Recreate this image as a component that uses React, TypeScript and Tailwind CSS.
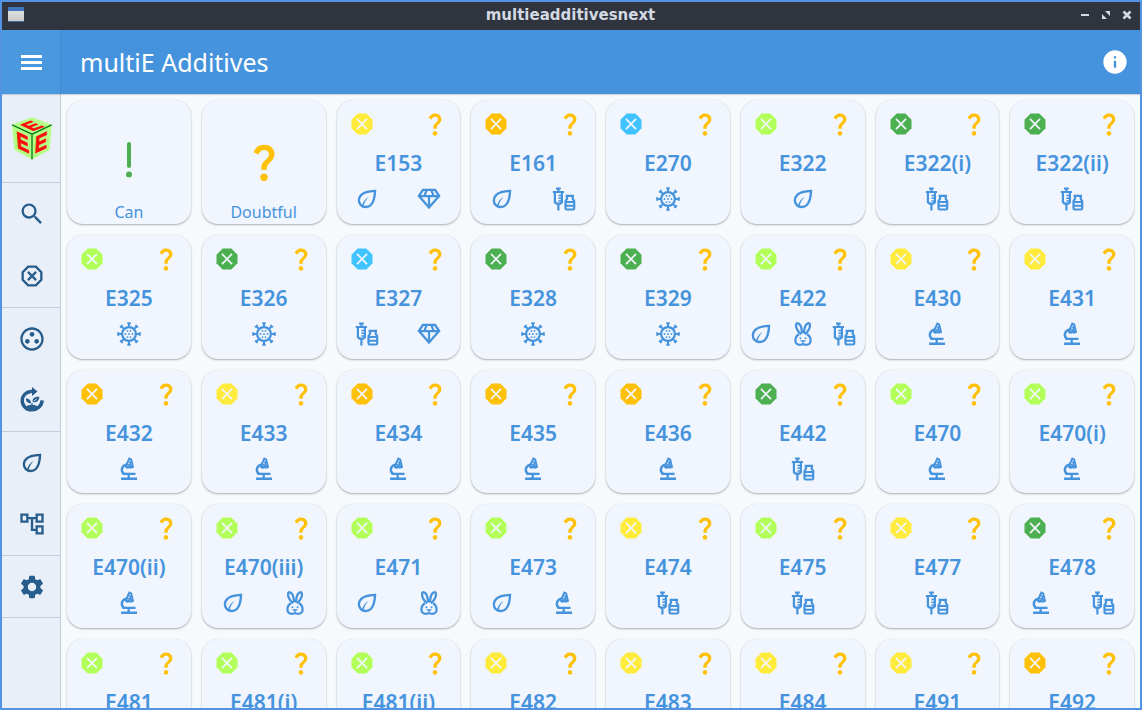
import type { ReactNode } from "react";
import {
  MdInfo,
  MdOutlineAccountTree,
  MdOutlineGroupWork,
  MdQuestionMark,
  MdSearch,
  MdSettings,
} from "react-icons/md";

const OCTAGON = "8.27,3 15.73,3 21,8.27 21,15.73 15.73,21 8.27,21 3,15.73 3,8.27";

type Origin = "leaf" | "gem" | "drug" | "virus" | "rabbit" | "micro";
type Level = "yellow" | "amber" | "blue" | "lime" | "green";

function Svg({ children, className = "size-7" }: { children: ReactNode; className?: string }) {
  return (
    <svg
      viewBox="0 0 24 24"
      className={className}
      fill="none"
      stroke="currentColor"
      strokeWidth="2"
      aria-hidden="true"
    >
      {children}
    </svg>
  );
}

function Leaf() {
  return (
    <Svg>
      <path d="M18.9 5.1C14 5.3 9.3 6.200 6.900 8.700C4.400 11.200 4.500 15.200 6.700 17.300C9 19.500 13 19.400 15.300 17.100C17.800 14.600 18.700 10 18.900 5.100Z" />
      <path d="M7.600 17.900C8.500 14.300 10.600 11.600 13.400 10C11.200 12.400 9.600 15 9 18.400Z" fill="currentColor" stroke="none" />
    </Svg>
  );
}

function Gem() {
  return (
    <Svg className="size-[26px]">
      <path d="M6.400 3.600H17.600L21.300 9.200L12 19.800L2.700 9.200Z" strokeWidth="2.200" />
      <path d="M2.500 9.400H21.500M12 9.400V19.500M9.700 4L7.800 9.200M14.300 4L16.200 9.200" strokeWidth="2" />
    </Svg>
  );
}

function Drug() {
  return (
    <Svg className="size-6">
      <path d="M4 1.500H8.800M6.400 1.500V5M0.800 5H12M6.400 17V23.500" strokeWidth="2.200" />
      <path d="M2.900 5.500V15.200L4.500 16.600H8.300L9.900 15.200V5.500" strokeWidth="2.200" />
      <path d="M6.400 8.500H10M6.400 11.200H10M6.400 13.900H9.500" strokeWidth="1.500" />
      <path d="M13.600 8.800H22M15 9.500V11.800L13.500 14V21.200Q13.500 22.500 14.600 22.500H21Q22.200 22.500 22.200 21.200V14L20.700 11.800V9.500" strokeWidth="2.200" />
      <path d="M13.500 15H22M13.500 18.800H22" strokeWidth="1.900" />
    </Svg>
  );
}

function Virus() {
  const spokes = [0, 45, 90, 135, 180, 225, 270, 315];
  return (
    <Svg className="size-6">
      <circle cx="12" cy="12" r="6.900" strokeWidth="2.200" />
      {spokes.map((angle) => (
        <path key={angle} d="M12 5.300V1.200M10.300 1.200H13.700" strokeWidth="2" transform={`rotate(${angle} 12 12)`} />
      ))}
      <g fill="currentColor" stroke="none">
        <circle cx="10.500" cy="8.900" r="0.950" />
        <circle cx="13.500" cy="8.900" r="0.950" />
        <circle cx="8.500" cy="12" r="0.950" />
        <circle cx="12" cy="12" r="0.950" />
        <circle cx="15.500" cy="12" r="0.950" />
        <circle cx="10.500" cy="15.100" r="0.950" />
        <circle cx="13.500" cy="15.100" r="0.950" />
      </g>
    </Svg>
  );
}

function Rabbit() {
  return (
    <Svg className="size-[26px]">
      <path
        d="M10.300 12.200C7.300 10.500 5 5.500 5.700 2.900C6.200 1.500 8 2 9.100 3.400C10.600 5.500 11 9 11 11.600M13.700 12.200C16.700 10.500 19 5.500 18.300 2.900C17.800 1.500 16 2 14.900 3.400C13.400 5.500 13 9 13 11.600"
        strokeWidth="2.100"
      />
      <path
        d="M8.300 12.300C6.200 13.500 5 15.600 5 18C5 20.500 6.800 22 9 22C10.400 22 11 21.400 12 21.400C13 21.400 13.600 22 15 22C17.200 22 19 20.500 19 18C19 15.600 17.800 13.500 15.700 12.300"
        strokeWidth="2.100"
      />
      <circle cx="9.600" cy="16" r="0.900" fill="currentColor" stroke="none" />
      <circle cx="14.400" cy="16" r="0.900" fill="currentColor" stroke="none" />
      <path d="M10.500 18.300H13.500L12 19.600ZM12 19V21.500" strokeWidth="1" />
    </Svg>
  );
}

function Microscope() {
  return (
    <Svg className="size-[26px]">
      <path d="M4.700 21H19.400M11.700 21.200V17.200M6 16.600H18" strokeWidth="2.100" />
      <path d="M9.500 7.900C4.500 9.300 4.300 14.600 7.500 16.600" strokeWidth="2.200" />
      <path d="M9.200 9.100L12.300 2.400L14 3.100L15.700 10.100L13.900 10.900L9.200 9.100" strokeWidth="1.800" />
      <path d="M12.800 4.800L14.200 10.600" strokeWidth="1.600" />
      <circle cx="10.700" cy="9.300" r="1.700" strokeWidth="1.500" />
    </Svg>
  );
}

function Recycle() {
  return (
    <Svg>
      <path d="M11 4.700C6.700 5 3.600 8.400 3.600 12.500C3.600 17 7.200 20.500 11.800 20.500C16.300 20.500 20.500 17 20.700 12.300" strokeWidth="2.900" />
      <path d="M10.500 3.300H12V0.800L16.700 4.700L12 8.600V6H10.500Z" fill="currentColor" stroke="none" />
      <path d="M5.500 18.500Q8.500 15.800 12 16Q15.500 15.800 18.500 18.500L15 21H9Z" fill="currentColor" stroke="none" />
      <path d="M11.200 15C8.300 15 6.600 13.300 6.800 10.800C9.500 10.800 11.200 12.300 11.200 15ZM12.700 13.900C12 10.700 14.200 8.900 18.200 9.200C18.300 12.400 16 14.500 12.700 13.900Z" fill="currentColor" stroke="none" />
      <path d="M12 17V14.500" strokeWidth="1" />
      <path d="M13.500 13.200L16 11" stroke="#e8eff8" strokeWidth="0.800" />
    </Svg>
  );
}

function OctagonOutline() {
  return (
    <Svg>
      <polygon points="8.700,4 15.300,4 20,8.700 20,15.300 15.300,20 8.700,20 4,15.300 4,8.700" />
      <path d="M8.500 8.500L15.500 15.500M15.500 8.500L8.500 15.500" />
    </Svg>
  );
}

function OctagonFilled() {
  return (
    <Svg>
      <polygon points={OCTAGON} fill="currentColor" stroke="none" />
      <path d="M7.700 7.700L16.300 16.300M16.300 7.700L7.700 16.300" stroke="#f1f5fd" strokeWidth="1.500" />
    </Svg>
  );
}

function Logo() {
  const faces = [
    "matrix(0.59 0.28 0.06 0.75 0 23)",
    "matrix(0.59 -0.28 -0.04 0.75 60 51)",
    "matrix(0.6 -0.23 0.59 0.28 0 23)",
  ];
  return (
    <svg viewBox="0 0 120 128" className="h-[43px] w-10" aria-hidden="true">
      <polygon points="60,0 119,23 113,98 60,127 7,98 0,23" fill="#b4ff85" />
      <path d="M0 23L60 51L119 23M60 51V127" stroke="#0c7a1c" strokeWidth="4" fill="none" />
      {faces.map((matrix) => (
        <text
          key={matrix}
          transform={matrix}
          x="50"
          y="84"
          textAnchor="middle"
          fontSize="94"
          fontWeight="700"
          fill="#fb0d0d"
          stroke="#fb0d0d"
          strokeWidth="4"
          className="font-['Liberation_Sans',sans-serif]"
        >
          E
        </text>
      ))}
    </svg>
  );
}

const originIcons: Record<Origin, { label: string; icon: ReactNode }> = {
  leaf: { label: "Plant", icon: <Leaf /> },
  gem: { label: "Mineral", icon: <Gem /> },
  drug: { label: "Synthetic", icon: <Drug /> },
  virus: { label: "Microbial", icon: <Virus /> },
  rabbit: { label: "Animal", icon: <Rabbit /> },
  micro: { label: "Artificial", icon: <Microscope /> },
};

const levelColors: Record<Level, string> = {
  yellow: "text-[#ffeb3b]",
  amber: "text-[#ffc107]",
  blue: "text-[#40c4ff]",
  lime: "text-[#b2ff59]",
  green: "text-[#4caf50]",
};

const additives: [string, Level, Origin[]][] = [
  ["E153", "yellow", ["leaf", "gem"]],
  ["E161", "amber", ["leaf", "drug"]],
  ["E270", "blue", ["virus"]],
  ["E322", "lime", ["leaf"]],
  ["E322(i)", "green", ["drug"]],
  ["E322(ii)", "green", ["drug"]],
  ["E325", "lime", ["virus"]],
  ["E326", "green", ["virus"]],
  ["E327", "blue", ["drug", "gem"]],
  ["E328", "green", ["virus"]],
  ["E329", "green", ["virus"]],
  ["E422", "lime", ["leaf", "rabbit", "drug"]],
  ["E430", "yellow", ["micro"]],
  ["E431", "yellow", ["micro"]],
  ["E432", "amber", ["micro"]],
  ["E433", "yellow", ["micro"]],
  ["E434", "amber", ["micro"]],
  ["E435", "amber", ["micro"]],
  ["E436", "amber", ["micro"]],
  ["E442", "green", ["drug"]],
  ["E470", "lime", ["micro"]],
  ["E470(i)", "lime", ["micro"]],
  ["E470(ii)", "lime", ["micro"]],
  ["E470(iii)", "lime", ["leaf", "rabbit"]],
  ["E471", "lime", ["leaf", "rabbit"]],
  ["E473", "lime", ["leaf", "micro"]],
  ["E474", "yellow", ["drug"]],
  ["E475", "lime", ["drug"]],
  ["E477", "yellow", ["drug"]],
  ["E478", "green", ["micro", "drug"]],
  ["E481", "lime", ["micro"]],
  ["E481(i)", "lime", ["micro"]],
  ["E481(ii)", "lime", ["micro"]],
  ["E482", "yellow", ["micro"]],
  ["E483", "yellow", ["micro"]],
  ["E484", "yellow", ["micro"]],
  ["E491", "yellow", ["micro"]],
  ["E492", "amber", ["micro"]],
];

const navGroups: { label: string; icon: ReactNode }[][] = [
  [
    { label: "Search", icon: <MdSearch className="size-7" /> },
    { label: "Danger", icon: <OctagonOutline /> },
  ],
  [
    { label: "Groups", icon: <MdOutlineGroupWork className="size-7" /> },
    { label: "Renewable", icon: <Recycle /> },
  ],
  [
    { label: "Origin", icon: <Leaf /> },
    { label: "Categories", icon: <MdOutlineAccountTree className="size-7" /> },
  ],
  [{ label: "Settings", icon: <MdSettings className="size-7" /> }],
];

const cardClass =
  "flex aspect-square min-w-0 flex-col rounded-2xl bg-[#f1f5fd] text-[#4593dd] shadow-[0_1px_2px_rgba(0,0,0,0.3),0_0_1px_rgba(0,0,0,0.1)]";

function AdditiveCard({ name, level, origins }: { name: string; level: Level; origins: Origin[] }) {
  return (
    <button type="button" className={cardClass}>
      <span className="flex w-full justify-between px-[11px] pt-2.5">
        <span className={levelColors[level]}>
          <OctagonFilled />
        </span>
        <MdQuestionMark className="size-7 text-[#ffc107]" />
      </span>
      <span className="mt-[9px] w-full text-center text-[21px] leading-8 font-semibold">{name}</span>
      <span className="mt-1.5 flex w-full justify-around">
        {origins.map((origin) => (
          <span
            key={origin}
            role="img"
            aria-label={originIcons[origin].label}
            className="flex size-7 items-center justify-center"
          >
            {originIcons[origin].icon}
          </span>
        ))}
      </span>
    </button>
  );
}

function FilterCard({ label, icon }: { label: string; icon: ReactNode }) {
  return (
    <button type="button" className={`${cardClass} items-center`}>
      <span className="flex flex-1 items-center pt-6">{icon}</span>
      <span className="text-base leading-6">{label}</span>
    </button>
  );
}

export default function App() {
  return (
    <div className="flex h-screen flex-col overflow-hidden border-2 border-[#5294e2] bg-[#f7fafd] font-['Noto_Sans',sans-serif]">
      <div className="flex h-7 shrink-0 items-center bg-[#2f343f] pr-[5px] pb-0.5 pl-1.5 text-[#d3dae3]">
        <svg viewBox="0 0 16 16" className="size-4" aria-hidden="true">
          <defs>
            <linearGradient id="window-body" x1="0" y1="0" x2="0" y2="1">
              <stop offset="0" stopColor="#e4e4e4" />
              <stop offset="1" stopColor="#c8c8c8" />
            </linearGradient>
          </defs>
          <rect width="16" height="15" fill="url(#window-body)" />
          <rect width="16" height="4" fill="#3f76bd" />
          <rect y="14" width="16" height="1" fill="#4a6e9c" />
        </svg>
        <h2 className="flex-1 pl-10 text-center font-['DejaVu_Sans',sans-serif] text-[15px] leading-5 font-bold">
          multieadditivesnext
        </h2>
        <div className="flex gap-[5px]">
          <button type="button" aria-label="Minimize">
            <svg viewBox="0 0 16 16" className="size-4">
              <rect x="4" y="7" width="8" height="2" fill="currentColor" />
            </svg>
          </button>
          <button type="button" aria-label="Maximize">
            <svg viewBox="0 0 16 16" className="size-4" fill="currentColor">
              <path d="M7 4H12V9ZM4 7V12H9Z" />
            </svg>
          </button>
          <button type="button" aria-label="Close">
            <svg viewBox="0 0 16 16" className="size-4">
              <path d="M4.500 4.500L11.500 11.500M11.500 4.500L4.500 11.500" stroke="currentColor" strokeWidth="2.500" />
            </svg>
          </button>
        </div>
      </div>

      <header className="z-10 flex h-16 shrink-0 items-center bg-[#4593dd] text-white shadow-[0_1px_1px_rgba(0,0,0,0.15)]">
        <button
          type="button"
          aria-label="Menu"
          className="flex h-full w-[59px] items-center justify-center border-r border-[#428cd1] bg-[#4a98dd] pl-px"
        >
          <svg viewBox="0 0 21 16" className="h-4 w-[21px]" fill="currentColor">
            <path d="M0 1H21V4H0ZM0 7H21V10H0ZM0 13H21V16H0Z" />
          </svg>
        </button>
        <h1 className="flex-1 pl-[19px] text-[25px] leading-8">multiE Additives</h1>
        <button type="button" aria-label="Information" className="mr-[11px]">
          <MdInfo className="size-7" />
        </button>
      </header>

      <div className="flex min-h-0 flex-1">
        <nav className="w-[59px] shrink-0 border-r border-[#c5ced8] bg-[#e8eff8] text-[#275d8c]">
          <a
            href="#home"
            aria-label="Home"
            className="flex h-[89px] items-center justify-center border-b border-[#c5ced8] pl-0.5"
          >
            <Logo />
          </a>
          {navGroups.map((group, index) => (
            <div
              key={group[0].label}
              className={`flex flex-col border-b border-[#c5ced8] ${
                group.length === 1 ? "h-[62px]" : index === 0 ? "h-[125px]" : "h-31"
              }`}
            >
              {group.map((item) => (
                <button
                  key={item.label}
                  type="button"
                  aria-label={item.label}
                  className="flex w-full flex-1 items-center justify-center pl-px"
                >
                  {item.icon}
                </button>
              ))}
            </div>
          ))}
        </nav>

        <main className="min-w-0 flex-1 overflow-y-auto p-1.5 [scrollbar-width:none]">
          <div className="grid grid-cols-8 gap-[11px]">
            <FilterCard
              label="Can"
              icon={
                <svg viewBox="0 0 24 46" className="h-[46px] w-6" aria-hidden="true">
                  <path d="M12 5V27" stroke="#4caf50" strokeWidth="4" strokeLinecap="round" />
                  <circle cx="12" cy="35.500" r="3" fill="#4caf50" />
                </svg>
              }
            />
            <FilterCard label="Doubtful" icon={<MdQuestionMark className="size-[46px] text-[#ffc107]" />} />
            {additives.map(([name, level, origins]) => (
              <AdditiveCard key={name} name={name} level={level} origins={origins} />
            ))}
          </div>
        </main>
      </div>
    </div>
  );
}
